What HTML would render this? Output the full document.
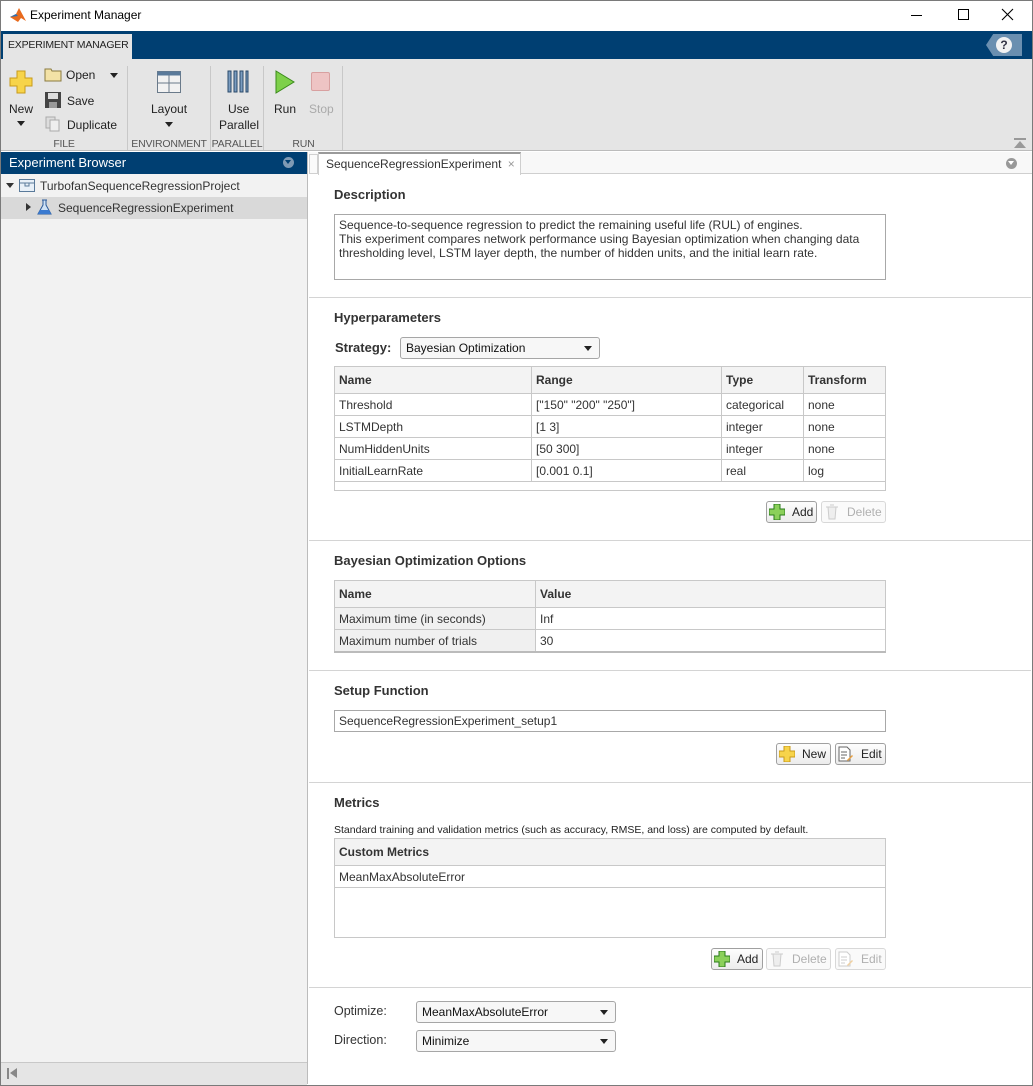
<!DOCTYPE html>
<html><head><meta charset="utf-8"><style>
*{box-sizing:border-box;margin:0;padding:0}
body{width:1033px;height:1086px;position:relative;overflow:hidden;background:#fff;font-family:"Liberation Sans",Arial,sans-serif;font-size:12px;color:#222}
.a{position:absolute}
.h{position:absolute;font-weight:bold;font-size:13px;color:#333}
.sep{position:absolute;left:309px;width:722px;height:1px;background:#d4d4d4}
.btn{position:absolute;height:22px;border:1px solid #a0a0a0;border-radius:3px;background:linear-gradient(#fdfdfd,#ececec);font-size:12px;line-height:20px;padding-left:25px;color:#222}
.btn.dis{border-color:#d8d8d8;color:#b0b0b0;background:#fafafa}
.dd{position:absolute;height:22px;border:1px solid #a6a6a6;border-radius:3px;background:#f7f7f7;line-height:20px;padding-left:5px;font-size:12px;color:#111}
.dd:after{content:"";position:absolute;right:7px;top:8px;border-left:4px solid transparent;border-right:4px solid transparent;border-top:5px solid #222}
table{position:absolute;border-collapse:collapse;font-size:12px}
td{border:1px solid #c8c8c8;padding:0 4px;height:22px;color:#333;vertical-align:middle}
th{border:1px solid #c8c8c8;padding:0 4px;height:27px;text-align:left;font-weight:bold;color:#333;background:#f3f3f3}
.lbl{position:absolute;font-size:10.5px;color:#555;text-align:center;white-space:nowrap;letter-spacing:-0.2px}
.tb{position:absolute;font-size:12px;color:#222;white-space:nowrap}
</style></head><body>
<div class="a" style="left:0;top:0;width:1033px;height:1086px;border:1px solid #7a7a7a"></div>
<svg class="a" style="left:9px;top:7px" width="18" height="16"><path d="M1 10 L7 7 L10 1 L17 14 L12 11 L9 15 Z" fill="#e86a1d"/><path d="M1 10 L7 7 L9 9 Z" fill="#2a6fb4"/></svg>
<div class="a" style="left:30px;top:8px;font-size:12px;color:#000">Experiment Manager</div>
<div class="a" style="left:911px;top:15px;width:11px;height:1px;background:#000"></div>
<div class="a" style="left:958px;top:9px;width:11px;height:11px;border:1px solid #000"></div>
<svg class="a" style="left:1001px;top:8px" width="13" height="13"><path d="M1 1L12 12M12 1L1 12" stroke="#000" stroke-width="1.1"/></svg>
<div class="a" style="left:1px;top:31px;width:1031px;height:28px;background:#003f72"></div>
<div class="a" style="left:3px;top:34px;width:129px;height:25px;background:#e5e5e5;font-size:10.5px;line-height:23px;padding-left:5px;color:#222;white-space:nowrap;letter-spacing:-0.2px">EXPERIMENT MANAGER</div>
<div class="a" style="left:986px;top:34px;width:36px;height:22px;background:#6a8fb0;clip-path:polygon(20% 0,100% 0,100% 100%,20% 100%,0 50%)"></div>
<div class="a" style="left:996px;top:37px;width:16px;height:16px;border-radius:50%;background:#f2f2f2;color:#334;font-weight:bold;font-size:12px;text-align:center;line-height:16px">?</div>
<div class="a" style="left:1px;top:59px;width:1031px;height:92px;background:#e5e5e5;border-bottom:1px solid #bcbcbc"></div>
<svg class="a" style="left:9px;top:70px" width="24" height="24"><path d="M8 1h8v7h7v8h-7v7h-8v-7h-7v-8h7z" fill="#f7d44a" stroke="#c89a1a"/></svg>
<div class="tb" style="left:9px;top:102px">New</div>
<div class="a" style="left:17px;top:121px;border-left:4px solid transparent;border-right:4px solid transparent;border-top:5px solid #222"></div>
<svg class="a" style="left:44px;top:67px" width="18" height="15"><path d="M1 2h6l1 2h9v10H1z" fill="#f3e2a6" stroke="#8a7a40"/></svg>
<div class="tb" style="left:66px;top:68px">Open</div>
<div class="a" style="left:110px;top:73px;border-left:4px solid transparent;border-right:4px solid transparent;border-top:5px solid #222"></div>
<svg class="a" style="left:45px;top:92px" width="16" height="16"><rect x="0" y="0" width="16" height="16" fill="#444"/><rect x="3" y="1" width="10" height="6" fill="#ddd"/><rect x="4" y="10" width="8" height="6" fill="#999"/></svg>
<div class="tb" style="left:67px;top:94px">Save</div>
<svg class="a" style="left:45px;top:116px" width="16" height="16"><rect x="1" y="1" width="9" height="11" fill="#ddd" stroke="#aaa"/><rect x="5" y="4" width="9" height="11" fill="#eee" stroke="#aaa"/></svg>
<div class="tb" style="left:67px;top:118px">Duplicate</div>
<div class="lbl" style="left:1px;top:138px;width:126px">FILE</div>
<div class="a" style="left:127px;top:66px;width:1px;height:84px;background:#c8c8c8"></div>
<svg class="a" style="left:157px;top:71px" width="24" height="22"><rect x="0.5" y="0.5" width="23" height="21" fill="#f2f2f2" stroke="#6a7a8a"/><rect x="0.5" y="0.5" width="23" height="4" fill="#5a7a9a"/><path d="M0 12H24M12 4V22" stroke="#6a7a8a"/></svg>
<div class="tb" style="left:151px;top:102px">Layout</div>
<div class="a" style="left:165px;top:122px;border-left:4px solid transparent;border-right:4px solid transparent;border-top:5px solid #222"></div>
<div class="lbl" style="left:128px;top:138px;width:82px">ENVIRONMENT</div>
<div class="a" style="left:210px;top:66px;width:1px;height:84px;background:#c8c8c8"></div>
<svg class="a" style="left:227px;top:70px" width="22" height="23"><g fill="#7a9cc0" stroke="#2a4a6a"><rect x="1" y="1" width="3" height="21"/><rect x="7" y="1" width="3" height="21"/><rect x="13" y="1" width="3" height="21"/><rect x="19" y="1" width="2" height="21"/></g></svg>
<div class="tb" style="left:228px;top:102px">Use</div>
<div class="tb" style="left:219px;top:118px">Parallel</div>
<div class="lbl" style="left:211px;top:138px;width:52px">PARALLEL</div>
<div class="a" style="left:263px;top:66px;width:1px;height:84px;background:#c8c8c8"></div>
<svg class="a" style="left:275px;top:70px" width="20" height="24"><path d="M1 1L19 12L1 23Z" fill="#7ed04a" stroke="#3a8a1a"/></svg>
<div class="tb" style="left:274px;top:102px">Run</div>
<div class="a" style="left:311px;top:72px;width:19px;height:19px;background:#eec4c4;border:1px solid #d8a0a0;border-radius:2px"></div>
<div class="tb" style="left:309px;top:102px;color:#aaa">Stop</div>
<div class="lbl" style="left:264px;top:138px;width:79px">RUN</div>
<div class="a" style="left:342px;top:66px;width:1px;height:84px;background:#c8c8c8"></div>
<div class="a" style="left:1014px;top:138px;width:12px;height:2px;background:#999"></div>
<div class="a" style="left:1014px;top:141px;border-left:6px solid transparent;border-right:6px solid transparent;border-bottom:7px solid #999"></div>
<div class="a" style="left:1px;top:152px;width:307px;height:932px;background:#f2f2f2;border-right:1px solid #bcbcbc"></div>
<div class="a" style="left:1px;top:152px;width:306px;height:22px;background:#003f72;color:#fff;font-size:13px;line-height:22px;padding-left:8px">Experiment Browser</div>
<div class="a" style="left:283px;top:157px;width:11px;height:11px;border-radius:50%;background:#7f9ab4"></div>
<div class="a" style="left:285px;top:160px;border-left:3.5px solid transparent;border-right:3.5px solid transparent;border-top:4px solid #003f72"></div>
<div class="a" style="left:6px;top:183px;border-left:4px solid transparent;border-right:4px solid transparent;border-top:5px solid #333"></div>
<svg class="a" style="left:19px;top:177px" width="16" height="15"><rect x="0.5" y="2.5" width="15" height="12" fill="#e8f0f8" stroke="#5a7a9a"/><path d="M0 6H16M6 6v3h4V6" stroke="#5a7a9a" fill="none"/></svg>
<div class="a" style="left:40px;top:179px;font-size:12px;color:#333">TurbofanSequenceRegressionProject</div>
<div class="a" style="left:1px;top:197px;width:306px;height:22px;background:#d9d9d9"></div>
<div class="a" style="left:26px;top:203px;border-top:4px solid transparent;border-bottom:4px solid transparent;border-left:5px solid #333"></div>
<svg class="a" style="left:37px;top:199px" width="15" height="17"><path d="M5 1h5M6 1v5L1 15h13L9 6V1" fill="#cfe2f5" stroke="#2a5a9a"/><path d="M3 11h9l2 4H1z" fill="#3a7ad0"/></svg>
<div class="a" style="left:58px;top:201px;font-size:12px;color:#333">SequenceRegressionExperiment</div>
<div class="a" style="left:1px;top:1062px;width:306px;height:23px;background:#e5e5e5;border-top:1px solid #c8c8c8"></div>
<div class="a" style="left:7px;top:1068px;width:2px;height:11px;background:#888"></div>
<div class="a" style="left:10px;top:1068px;border-top:5.5px solid transparent;border-bottom:5.5px solid transparent;border-right:7px solid #888"></div>
<div class="a" style="left:309px;top:152px;width:723px;height:22px;background:#f8f8f8;border-bottom:1px solid #cfcfcf"></div>
<div class="a" style="left:309px;top:154px;width:9px;height:20px;border:1px solid #d0d0d0;background:#fafafa"></div>
<div class="a" style="left:318px;top:152px;width:203px;height:23px;background:#fff;border:1px solid #cfcfcf;border-top:2px solid #9a9a9a;border-bottom:none;font-size:12px;line-height:20px;padding-left:7px;color:#333;white-space:nowrap">SequenceRegressionExperiment <span style="color:#999;margin-left:3px">×</span></div>
<div class="a" style="left:1006px;top:158px;width:11px;height:11px;border-radius:50%;background:#999"></div>
<div class="a" style="left:1008px;top:161px;border-left:3.5px solid transparent;border-right:3.5px solid transparent;border-top:4px solid #fff"></div>
<div class="h" style="left:334px;top:187px">Description</div>
<div class="a" style="left:334px;top:214px;width:552px;height:66px;border:1px solid #a8a8a8;padding:3px 4px;font-size:12px;line-height:14px;color:#333">Sequence-to-sequence regression to predict the remaining useful life (RUL) of engines.<br>This experiment compares network performance using Bayesian optimization when changing data thresholding level, LSTM layer depth, the number of hidden units, and the initial learn rate.</div>
<div class="sep" style="top:297px"></div>
<div class="h" style="left:334px;top:310px">Hyperparameters</div>
<div class="h" style="left:335px;top:340px">Strategy:</div>
<div class="dd" style="left:400px;top:337px;width:200px">Bayesian Optimization</div>
<table style="left:334px;top:366px;width:552px">
<tr><th style="width:197px">Name</th><th style="width:190px">Range</th><th style="width:82px">Type</th><th>Transform</th></tr>
<tr><td>Threshold</td><td>["150" "200" "250"]</td><td>categorical</td><td>none</td></tr>
<tr><td>LSTMDepth</td><td>[1 3]</td><td>integer</td><td>none</td></tr>
<tr><td>NumHiddenUnits</td><td>[50 300]</td><td>integer</td><td>none</td></tr>
<tr><td>InitialLearnRate</td><td>[0.001 0.1]</td><td>real</td><td>log</td></tr>
<tr><td colspan="4" style="height:9px"></td></tr>
</table>
<div class="btn" style="left:766px;top:501px;width:51px">Add</div>
<svg class="a" style="left:769px;top:504px" width="16" height="16"><path d="M5 0h6v5h5v6h-5v5H5v-5H0V5h5z" fill="#8bd05a" stroke="#2a7a1a"/></svg>
<div class="btn dis" style="left:821px;top:501px;width:65px">Delete</div>
<svg class="a" style="left:825px;top:504px" width="14" height="16"><path d="M1 3h12M3 3l1 12h6l1-12M5 1h4" stroke="#ccc" fill="#eee"/></svg>
<div class="sep" style="top:540px"></div>
<div class="h" style="left:334px;top:553px">Bayesian Optimization Options</div>
<table style="left:334px;top:580px;width:552px">
<tr><th style="width:201px">Name</th><th>Value</th></tr>
<tr><td style="background:#f0f0f0">Maximum time (in seconds)</td><td>Inf</td></tr>
<tr><td style="background:#f0f0f0">Maximum number of trials</td><td>30</td></tr>
</table>
<div class="a" style="left:334px;top:651px;width:552px;height:2px;background:#bbb"></div>
<div class="sep" style="top:670px"></div>
<div class="h" style="left:334px;top:683px">Setup Function</div>
<div class="a" style="left:334px;top:710px;width:552px;height:22px;border:1px solid #a8a8a8;line-height:20px;padding-left:4px;color:#333">SequenceRegressionExperiment_setup1</div>
<div class="btn" style="left:776px;top:743px;width:55px">New</div>
<svg class="a" style="left:779px;top:746px" width="16" height="16"><path d="M5 0h6v5h5v6h-5v5H5v-5H0V5h5z" fill="#f7d44a" stroke="#c89a1a"/></svg>
<div class="btn" style="left:835px;top:743px;width:51px">Edit</div>
<svg class="a" style="left:838px;top:746px" width="16" height="16"><path d="M1 1h8l3 3v11H1z" fill="#fff" stroke="#666"/><path d="M3 6h6M3 9h6M3 12h4" stroke="#666"/><path d="M9 14l5-5 1 1-5 5z" fill="#e8a040"/></svg>
<div class="sep" style="top:782px"></div>
<div class="h" style="left:334px;top:795px">Metrics</div>
<div class="a" style="left:334px;top:824px;font-size:10.5px;color:#222">Standard training and validation metrics (such as accuracy, RMSE, and loss) are computed by default.</div>
<table style="left:334px;top:838px;width:552px">
<tr><th>Custom Metrics</th></tr>
<tr><td>MeanMaxAbsoluteError</td></tr>
<tr><td style="height:50px"></td></tr>
</table>
<div class="btn" style="left:711px;top:948px;width:52px">Add</div>
<svg class="a" style="left:714px;top:951px" width="16" height="16"><path d="M5 0h6v5h5v6h-5v5H5v-5H0V5h5z" fill="#8bd05a" stroke="#2a7a1a"/></svg>
<div class="btn dis" style="left:766px;top:948px;width:65px">Delete</div>
<svg class="a" style="left:770px;top:951px" width="14" height="16"><path d="M1 3h12M3 3l1 12h6l1-12M5 1h4" stroke="#ccc" fill="#eee"/></svg>
<div class="btn dis" style="left:835px;top:948px;width:51px">Edit</div>
<svg class="a" style="left:838px;top:951px" width="16" height="16"><path d="M1 1h8l3 3v11H1z" fill="#fff" stroke="#ccc"/><path d="M3 6h6M3 9h6M3 12h4" stroke="#ccc"/><path d="M9 14l5-5 1 1-5 5z" fill="#f0d0a0"/></svg>
<div class="sep" style="top:987px"></div>
<div class="a" style="left:334px;top:1004px;font-size:12.5px;color:#333">Optimize:</div>
<div class="dd" style="left:416px;top:1001px;width:200px">MeanMaxAbsoluteError</div>
<div class="a" style="left:334px;top:1033px;font-size:12.5px;color:#333">Direction:</div>
<div class="dd" style="left:416px;top:1030px;width:200px">Minimize</div>
</body></html>
